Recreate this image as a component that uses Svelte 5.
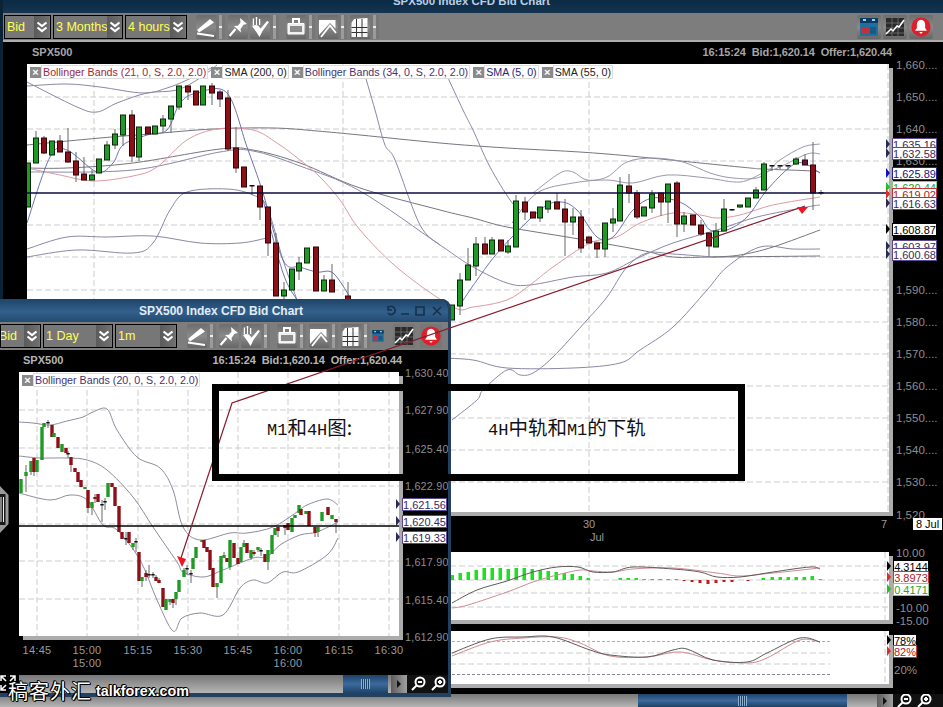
<script>
  const selectsMain = [
    { label: "Bid", w: 47 },
    { label: "3 Months", w: 70 },
    { label: "4 hours", w: 62 },
  ];
  const selectsFloat = [
    { label: "Bid", w: 41, cut: true },
    { label: "1 Day", w: 70 },
    { label: "1m", w: 62 },
  ];
  const tools = [
    { icon: "pencil", split: true },
    { icon: "pin" },
    { icon: "hand", split: true, gap: 2 },
    { icon: "bag", split: true, gap: 7 },
    { icon: "peak", split: true },
    { icon: "grid", split: true },
  ];

  // x, top, bottom, high, low, colour
  const mainCandles = [
    [28,163,207,163,207,"g"],[36,138,163,131,163,"g"],[44,138,153,136,154,"r"],[52,141,155,141,155,"g"],
    [60,141,152,135,152,"r"],[68,152,162,128,163,"r"],[76,161,175,152,182,"r"],[84,174,180,157,180,"r"],
    [92,175,180,170,180,"g"],[99,159,173,159,173,"g"],[107,145,160,141,160,"g"],[115,134,145,129,149,"g"],
    [123,115,135,115,146,"g"],[132,115,156,110,162,"r"],[139,127,157,127,161,"g"],[148,127,134,127,134,"r"],
    [155,126,134,126,134,"g"],[163,119,126,115,133,"g"],[171,106,119,106,133,"g"],[179,86,107,86,110,"g"],
    [188,86,92,86,100,"r"],[196,91,105,91,105,"r"],[203,86,105,86,105,"g"],[212,86,93,83,105,"r"],
    [220,92,99,90,107,"m"],[228,98,149,90,151,"r"],[236,148,168,127,173,"r"],[244,167,187,167,187,"r"],
    [252,185,186,185,195,"k"],[260,186,207,186,220,"r"],[268,207,243,207,256,"r"],[276,243,296,233,296,"r"],
    [284,290,296,282,300,"g"],[292,269,290,269,290,"g"],[299,263,271,257,280,"g"],[307,248,263,248,263,"g"],
    [316,247,291,247,291,"r"],[324,280,291,275,291,"g"],[332,280,292,264,292,"r"],[348,296,300,282,300,"r"],
    [452,305,320,305,320,"g"],[460,280,306,273,315,"g"],[468,265,280,248,280,"g"],[476,244,266,237,276,"g"],
    [485,244,254,237,254,"r"],[492,240,254,237,254,"g"],[501,240,251,240,251,"r"],[508,246,252,240,254,"g"],
    [516,201,247,195,247,"g"],[525,202,212,197,220,"r"],[533,212,218,212,218,"r"],[540,207,218,207,222,"g"],
    [548,201,209,201,213,"g"],[557,202,209,193,209,"r"],[565,209,222,199,256,"r"],[573,217,222,208,235,"g"],
    [581,217,248,210,253,"r"],[589,237,243,237,243,"r"],[597,243,249,243,258,"r"],[605,223,249,223,257,"g"],
    [613,219,223,208,232,"g"],[620,185,221,177,221,"g"],[629,186,193,174,203,"r"],[637,193,217,190,219,"r"],
    [644,207,216,207,216,"g"],[652,194,208,190,213,"g"],[661,193,202,193,216,"r"],[668,184,202,184,223,"g"],
    [677,183,224,181,237,"r"],[684,216,224,212,232,"g"],[693,215,225,215,225,"r"],[701,225,234,220,236,"r"],
    [709,233,246,233,257,"r"],[716,231,247,223,247,"g"],[724,209,231,199,231,"g"],[732,209,210,209,211,"k"],
    [740,205,207,205,208,"g"],[748,198,207,198,207,"g"],[756,190,198,187,198,"g"],[764,164,190,162,190,"g"],
    [772,165,166,165,171,"k"],[780,165,166,165,169,"k"],[788,165,166,165,170,"k"],[796,159,164,157,165,"g"],
    [805,160,165,154,165,"m"],[813,165,193,142,210,"r"],[821,192,193,190,195,"k"],
  ];

  const floatCandles = [
    [21,479,493,479,493,"g"],[26,472,476,465,492,"g"],[31,461,472,461,475,"g"],[34,458,472,458,476,"r"],
    [37,460,472,460,472,"g"],[42,427,460,427,460,"g"],[44,423,427,423,427,"g"],[48,422,423,420,428,"k"],
    [52,425,437,425,437,"r"],[54,433,437,433,437,"g"],[58,437,448,437,448,"r"],[62,444,452,444,452,"g"],
    [66,448,453,448,453,"r"],[68,453,454,451,458,"k"],[71,457,465,457,472,"r"],[75,468,472,468,472,"r"],
    [78,472,482,472,482,"r"],[81,480,487,480,487,"r"],[85,487,489,487,489,"g"],[88,490,508,490,513,"r"],
    [92,502,508,502,515,"g"],[95,497,499,494,503,"r"],[98,494,502,494,502,"r"],[102,504,505,500,522,"k"],
    [105,501,502,498,510,"k"],[108,483,497,483,497,"g"],[112,483,487,483,487,"r"],[115,487,506,487,506,"r"],
    [119,506,532,506,532,"r"],[122,532,539,532,539,"r"],[126,538,539,532,545,"k"],[129,532,543,532,543,"r"],
    [133,543,547,543,550,"g"],[136,541,542,538,552,"k"],[139,552,581,552,581,"r"],[142,577,581,577,587,"g"],
    [146,573,577,570,581,"r"],[149,574,575,565,578,"k"],[153,574,575,572,578,"k"],[156,577,581,575,581,"r"],
    [159,580,583,578,583,"r"],[163,588,607,588,607,"r"],[166,599,610,599,610,"g"],[170,599,602,599,605,"g"],
    [173,599,603,599,608,"r"],[176,592,599,592,605,"g"],[179,580,592,580,592,"g"],[184,570,577,568,577,"g"],
    [187,568,569,565,575,"k"],[191,573,574,570,583,"k"],[193,558,569,558,569,"g"],[196,547,558,547,558,"g"],
    [202,540,542,540,542,"g"],[204,540,548,540,548,"r"],[207,547,552,547,552,"r"],[210,550,570,550,570,"r"],
    [213,568,587,568,587,"r"],[217,583,587,583,598,"g"],[221,556,583,556,583,"g"],[224,555,558,552,558,"g"],
    [227,558,562,558,562,"r"],[230,540,567,540,570,"g"],[234,543,558,543,558,"r"],[238,558,564,558,564,"r"],
    [241,547,562,547,562,"g"],[244,543,547,540,547,"g"],[247,543,553,543,553,"r"],[251,550,558,550,560,"g"],
    [254,552,554,550,556,"r"],[258,547,550,547,552,"g"],[261,550,551,548,556,"k"],[265,554,562,554,562,"r"],
    [268,550,562,550,570,"g"],[272,535,554,535,554,"g"],[275,528,535,528,535,"g"],[278,527,531,527,537,"r"],
    [285,525,528,525,535,"r"],[288,523,530,523,530,"r"],[292,518,532,518,532,"g"],[295,515,518,515,518,"g"],
    [299,505,513,505,513,"g"],[301,509,515,509,515,"r"],[306,511,514,511,514,"g"],[309,511,526,511,526,"r"],
    [315,527,533,527,537,"r"],[318,527,532,527,537,"g"],[322,512,521,512,521,"g"],[328,507,515,507,515,"r"],
    [332,515,519,515,519,"g"],[336,519,522,519,533,"r"],
  ];

  const mainLines = [
    { c: "#77757f", p: [[27,145],[100,138],[150,134],[213,129],[273,128],[317,131],[360,135],[440,143],[507,148],[607,154],[740,167],[763,169],[812,171],[820,173]] },
    { c: "#8a88a6", p: [[27,82],[77,107],[97,112],[117,103],[147,93],[177,90],[200,78],[217,65]] },
    { c: "#8a88a6", p: [[27,86],[67,84],[100,87],[143,93],[167,88],[187,80],[213,67]] },
    { c: "#77757f", p: [[27,168],[67,168],[133,163],[220,149],[253,150],[300,163],[360,188],[440,210],[473,218],[507,227],[573,238],[640,250],[673,257],[713,257],[820,256]] },
    { c: "#8a88a6", p: [[27,172],[133,170],[220,152],[253,151],[300,166],[360,191],[440,245],[473,267],[507,283],[530,285],[573,277],[607,273],[640,257],[673,243],[717,230],[757,217],[807,207],[820,205]] },
    { c: "#8a88a6", p: [[362,65],[375,110],[385,145],[395,160],[420,225],[440,245]] },
    { c: "#8a88a6", p: [[442,65],[463,110],[473,130],[490,167],[510,200],[520,210]] },
    { c: "#9a98ad", p: [[533,193],[560,173],[573,172],[587,180],[607,177],[627,162],[653,158],[683,162],[710,173],[733,178],[760,177],[780,160],[803,147],[820,144]] },
    { c: "#9a98ad", p: [[512,223],[537,193],[573,183],[607,180],[633,183],[667,175],[707,178],[740,182],[763,173],[780,167],[807,154],[820,154]] },
    { c: "#8a88a6", p: [[27,249],[67,237],[107,237],[153,236],[200,243],[240,243],[267,238]] },
    { c: "#8a88a6", p: [[27,257],[77,250],[133,253],[153,243],[170,210],[187,192],[227,189],[253,195],[267,207],[283,260],[297,300]] },
    { c: "#8a88a6", p: [[440,358],[473,360],[507,368],[573,368],[620,363],[640,350],[673,327],[707,290],[727,267],[760,247],[793,249],[820,249]] },
    { c: "#8a88a6", p: [[452,420],[477,400],[483,390],[507,370],[520,375],[533,373],[553,357],[587,320],[607,297],[627,267],[647,253],[673,254],[713,257]] },
    { c: "#77757f", p: [[713,257],[740,255],[773,247],[820,230]] },
    { c: "#dc9aa2", p: [[27,168],[60,175],[93,181],[133,176],[157,167],[187,140],[217,129],[253,130],[277,143],[300,160],[320,177],[340,200],[360,230],[400,270],[453,307],[473,307],[507,300],[530,285],[553,267],[590,243],[617,237],[640,223],[673,213],[700,215],[717,218],[740,215],[773,205],[820,197]] },
    { c: "#6a73b4", p: [[27,223],[50,157],[67,150],[97,172],[113,163],[123,145],[147,135],[167,130],[180,103],[197,93],[227,93],[247,147],[263,193],[283,260],[300,267],[317,272],[333,273],[350,297]] },
    { c: "#6a73b4", p: [[263,200],[283,273],[297,300]] },
    { c: "#6a73b4", p: [[460,305],[477,280],[500,250],[540,210],[560,202],[577,210],[597,237],[613,237],[633,210],[653,198],[680,202],[700,217],[710,230],[727,230],[747,217],[767,190],[790,167],[803,163],[820,173]] },
  ];

  const floatLines = [
    [[19,422],[33,423],[50,425],[67,421],[83,417],[93,412],[107,409],[117,430],[137,457],[160,468],[173,490],[183,527],[200,540],[230,533],[247,533],[273,527],[297,512],[307,505],[327,499],[338,505]],
    [[19,456],[40,458],[67,458],[87,460],[107,470],[133,497],[153,527],[177,562],[183,572],[203,577],[223,570],[253,558],[267,557],[280,545],[300,535],[317,532],[338,522]],
    [[19,493],[50,500],[70,495],[87,500],[103,525],[117,530],[140,560],[157,600],[173,631],[182,618],[200,613],[223,615],[240,588],[253,580],[267,583],[283,572],[298,572],[327,555],[338,538]],
  ];

  const macdBars = [
    [452,575],[460,573],[468,572],[476,570],[484,568],[492,568],[500,568],[508,569],[516,568],[524,568],[532,569],[540,570],[548,571],[556,572],[564,573],[572,574],[580,576],[588,578],
    [620,578],[628,578],[636,578],[644,579],[652,579],[660,579],[668,579],[676,579],
    [763,578],[772,577],[780,577],[788,577],[796,577],[804,577],[812,576],[820,579],
  ];
  const macdRed = [[684,581],[692,582],[700,583],[708,584],[716,583],[724,582],[732,582],[748,581]];

  const macdDark = [[452,603],[477,590],[507,581],[533,572],[557,567],[578,567],[593,572],[613,572],[633,567],[673,569],[700,572],[717,577],[740,577],[773,572],[810,567],[820,569]];
  const macdPink = [[452,608],[468,605],[507,592],[533,582],[557,575],[580,570],[593,571],[613,572],[633,569],[673,568],[717,573],[740,576],[773,573],[820,568]];
  const stochDark = [[452,653],[490,639],[523,637],[553,637],[590,650],[610,655],[647,657],[673,650],[687,649],[713,660],[747,662],[767,653],[800,638],[820,642]];
  const stochPink = [[452,656],[490,642],[523,638],[557,637],[580,643],[610,656],[647,657],[680,652],[713,660],[747,663],[767,658],[800,640],[820,642]];

  const mainHoriz = [97,129,161,225,257,290,322,354,386,418,450,482];
  const floatHoriz = [410,448,486,524,561,599];
  const floatVert = [37,87,138,188,238,288,339,389];

  const mainAxis = [
    [65,"1,660...."],[97,"1,650...."],[129,"1,640...."],[161,"1,630...."],[290,"1,590...."],[322,"1,580...."],
    [354,"1,570...."],[386,"1,560...."],[418,"1,550...."],[450,"1,540...."],[482,"1,530...."],[515,"1,520...."],
  ];
  const mainTags = [
    { y: 144, t: "1,635.16", k: "violet" },{ y: 153, t: "1,632.58", k: "violet" },{ y: 173, t: "1,625.89", k: "blue" },
    { y: 187, t: "1,620.44", k: "green" },{ y: 194, t: "1,619.02", k: "red" },{ y: 203, t: "1,616.63", k: "violet" },
    { y: 229, t: "1,608.87", k: "black" },{ y: 246, t: "1,603.97", k: "violet" },{ y: 254, t: "1,600.68", k: "violet" },
  ];
  const floatAxis = [
    [373,"1,630.40"],[410,"1,627.90"],[449,"1,625.40"],[486,"1,622.90"],[562,"1,617.90"],[600,"1,615.40"],[637,"1,612.90"],
  ];
  const floatTags = [
    { y: 504, t: "1,621.56", k: "violet" },{ y: 521, t: "1,620.45", k: "violet" },{ y: 537, t: "1,619.33", k: "violet" },
  ];
  const floatTimes = [
    ["14:45",37],["15:00",87],["15:15",138],["15:30",188],["15:45",238],["16:00",288],["16:15",339],["16:30",389],
  ];

  // catmull-rom through the read-off points, the bands are soft curves
  const smooth = (p) => {
    let d = `M${p[0][0]} ${p[0][1]}`;
    for (let i = 0; i < p.length - 1; i++) {
      const a = p[i - 1] || p[i];
      const b = p[i];
      const c = p[i + 1];
      const e = p[i + 2] || c;
      const c1 = [b[0] + (c[0] - a[0]) / 6, b[1] + (c[1] - a[1]) / 6];
      const c2 = [c[0] - (e[0] - b[0]) / 6, c[1] - (e[1] - b[1]) / 6];
      d += ` C${c1[0].toFixed(1)} ${c1[1].toFixed(1)} ${c2[0].toFixed(1)} ${c2[1].toFixed(1)} ${c[0]} ${c[1]}`;
    }
    return d;
  };
</script>

{#snippet icon(name)}
  <svg class="ico" viewBox="0 0 20 24" aria-hidden="true">
    {#if name === "pencil"}
      <path d="M1 15 14 4l4 3.500L3 17.500z" fill="#fff" />
      <path d="M1 18.500 18 21" stroke="#fff" stroke-width="1.800" fill="none" />
    {:else if name === "pin"}
      <path d="M12 3l7 6-3.500.8-3 4.200.5 3.500-7-6.500 3.800-.3 2.700-3.200z" fill="#fff" />
      <path d="M7.500 14 1.500 21" stroke="#fff" stroke-width="2.200" fill="none" />
    {:else if name === "hand"}
      <path d="M2 11l5 7 2.500 4 3-6 6.500-9-2-1-5 6-1.500 1.500-2.500-3-2.500-.5z" fill="#fff" />
      <path d="M3.500 3.500v7M6.500 2v8M9.500 4v6" stroke="#fff" stroke-width="1.500" fill="none" />
      <path d="M5 4v6M8 4v6" stroke="#555" stroke-width=".8" fill="none" />
    {:else if name === "bag"}
      <path d="M2 8.500h16V19H2z" fill="#eee" stroke="#fff" />
      <path d="M4 11h12v6H4z" fill="#8b8b8b" />
      <path d="M7 9V4h6v5" fill="none" stroke="#fff" stroke-width="2" />
    {:else if name === "peak"}
      <path d="M1 5h16.500v8.500L12 8 1 20z" fill="#fff" />
      <path d="M3 22 12 10.500 18 18" fill="none" stroke="#fff" stroke-width="1.800" />
    {:else if name === "grid"}
      <path d="M1.500 8h16v14h-16z" fill="#f6f6f6" />
      <path d="M1.500 8 4 4l13.500-1v5z" fill="#fff" />
      <path d="M6.500 4v18M12 4v18M1.500 12.500h16M1.500 17.500h16" stroke="#333" fill="none" />
    {/if}
  </svg>
{/snippet}

{#snippet calendar()}
  <svg class="ico" viewBox="0 0 22 24" aria-hidden="true">
    <path d="M2 3h18v18H2z" fill="#1f6f9f" />
    <path d="M2 3h18v5H2z" fill="#0d3a5f" />
    <path d="M5 4h3v2H5zM14 4h3v2h-3z" fill="#9fd0f0" />
    <path d="M4 12h7v7H4z" fill="#c23040" />
    <path d="M12 12h6v7h-6z" fill="#165a8a" />
  </svg>
{/snippet}

{#snippet linechart()}
  <svg class="ico" viewBox="0 0 22 24" aria-hidden="true">
    <path d="M2 3h18v18H2z" fill="#2a2a2a" />
    <path d="M2 8h18M2 13h18M2 18h18M8 3v18M14 3v18" stroke="#8a8a8a" stroke-width=".6" />
    <path d="M2 19l5-5 2 2 4-5 2 1 5-7" stroke="#fff" stroke-width="1.500" fill="none" />
  </svg>
{/snippet}

{#snippet bell()}
  <svg class="ico" viewBox="0 0 24 24" aria-hidden="true">
    <circle cx="12" cy="12" r="10.500" fill="#dd1f2a" />
    <path d="M12 4c3 0 4.500 2.500 4.500 5v4l2 3h-13l2-3V9c0-2.500 1.500-5 4.500-5z" fill="#fff" />
    <path d="M10 17.500h4l-2 2z" fill="#fff" />
  </svg>
{/snippet}

{#snippet toolbar(selects, compact)}
  <div class="toolbar" class:compact>
    <div class="selects">
      {#each selects as s}
        <div class="select" style="width:{s.w}px">
          <span class="val" class:cut={s.cut}>{s.label}</span>
          <span class="chev">
            <svg viewBox="0 0 12 14" aria-hidden="true">
              <path d="M1.500 2.500 6 6l4.500-3.500M1.500 7.500 6 11l4.500-3.500" fill="none" stroke="#fff" stroke-width="2.200" />
            </svg>
          </span>
        </div>
      {/each}
    </div>
    <div class="tools">
      {#each tools as t}
        <div class="tool" style="margin-left:{t.gap ?? 3}px">
          {@render icon(t.icon)}
          {#if t.split}<span class="split"></span>{/if}
        </div>
      {/each}
    </div>
    <div class="tools end">
      <div class="tool wide narrow">{@render calendar()}</div>
      <div class="tool wide">{@render linechart()}</div>
      <div class="tool wide">{@render bell()}</div>
    </div>
  </div>
{/snippet}

{#snippet tags(list, top)}
  {#each list as tag}
    <span class="tag {tag.k}" style="top:{tag.y - top - 6}px">{tag.t}</span>
  {/each}
{/snippet}

{#snippet candle(list, w, outline)}
  {#each list as [x, t, b, hi, lo, k]}
    <path class="wick" d="M{x} {hi}V{lo}" />
    {#if k === "k"}
      <rect x={x - w / 2} y={t} width={w} height="1.500" fill="#111" />
    {:else}
      <rect class="body {k}" class:outline x={x - w / 2} y={t} width={w} height={Math.max(b - t, 1)} />
    {/if}
  {/each}
{/snippet}

{#snippet scroller(left, thumb, arrowGap)}
  <div class="scroller" style="padding-left:{left}px">
    <span class="thumb" style="width:{thumb}px"><i></i></span>
    <span class="arrow" style="margin-left:{arrowGap}px"></span>
    <span class="lenses">
      <svg class="lens" viewBox="0 0 16 16" aria-hidden="true">
        <circle cx="10" cy="6" r="4.500" fill="#111" stroke="#fff" stroke-width="2" />
        <path d="M6.500 9.500 2 14M8 6h4" stroke="#fff" stroke-width="2" fill="none" />
      </svg>
      <svg class="lens" viewBox="0 0 16 16" aria-hidden="true">
        <circle cx="10" cy="6" r="4.500" fill="#111" stroke="#fff" stroke-width="2" />
        <path d="M6.500 9.500 2 14M8 6h4M10 4v4" stroke="#fff" stroke-width="2" fill="none" />
      </svg>
    </span>
  </div>
{/snippet}

<div class="desk">
  <section class="win main">
    <header class="title"><span>SPX500 Index CFD Bid Chart</span></header>
    {@render toolbar(selectsMain, false)}
    <div class="grid">
      <div class="head">
        <b class="sym">SPX500</b>
        <b class="quote">16:15:24&nbsp;&nbsp;Bid:1,620.14&nbsp;&nbsp;Offer:1,620.44</b>
      </div>
      <div class="collapse"></div>

      <div class="pane">
        <svg viewBox="27 64 862 448" width="862" height="448" aria-hidden="true">
          {#each mainHoriz as y}<path class="dash" d="M27 {y}H889" />{/each}
          {#each [94, 343, 589, 888] as x}<path class="dash" d="M{x} 64V512" />{/each}
          {#each mainLines as l}<path class="line" d={smooth(l.p)} stroke={l.c} />{/each}
          {@render candle(mainCandles, 5, true)}
          <path class="now" d="M27 193H889" />
        </svg>
        <div class="studies">
          <span class="study"><i></i><em class="brick">Bollinger Bands (21, 0, S, 2.0, 2.0)</em></span>
          <span class="study"><i></i><em class="ink">SMA (200, 0)</em></span>
          <span class="study"><i></i><em class="plum">Bollinger Bands (34, 0, S, 2.0, 2.0)</em></span>
          <span class="study"><i></i><em class="navy">SMA (5, 0)</em></span>
          <span class="study"><i></i><em class="ink">SMA (55, 0)</em></span>
        </div>
      </div>
      <div class="axis">
        {#each mainAxis as [y, t]}<span class="tick" style="top:{y - 64 - 7}px">{t}</span>{/each}
        {@render tags(mainTags, 64)}
      </div>

      <div class="times">
        <span class="time" style="left:{589 - 27}px">30</span>
        <span class="time low" style="left:{597 - 27}px">Jul</span>
        <span class="time" style="left:{884 - 27}px">7</span>
      </div>
      <div class="axis"><span class="date">8 Jul</span></div>

      <div class="pane">
        <svg viewBox="27 552 862 68" width="862" height="68" aria-hidden="true">
          {#each [566, 580, 593, 607] as y}<path class="dash" d="M27 {y}H889" />{/each}
          {#each [589, 885] as x}<path class="dash" d="M{x} 552V620" />{/each}
          {#each macdBars as [x, t]}<rect x={x - 1.500} y={t} width="3.500" height={580 - t} fill="#1fe01f" />{/each}
          {#each macdRed as [x, b]}<rect x={x - 1.500} y="580" width="3" height={b - 580} fill="#c11a1a" />{/each}
          <path class="line" d={smooth(macdPink)} stroke="#d28a93" />
          <path class="line" d={smooth(macdDark)} stroke="#5d5a5a" />
        </svg>
      </div>
      <div class="axis">
        <span class="tick" style="top:-6px">10.00</span>
        <span class="tick" style="top:49px">-10.00</span>
        <span class="tick" style="top:62px">-15.00</span>
        <span class="tag black short" style="top:8px">4.3144</span>
        <span class="tag red short" style="top:19px">3.8973</span>
        <span class="tag green short" style="top:31px">0.4171</span>
      </div>

      <div class="spacer"></div>
      <div class="spacer"></div>

      <div class="pane">
        <svg viewBox="27 631 862 53" width="862" height="53" aria-hidden="true">
          <path class="dash red" d="M27 641.500H830" />
          <path class="dash" d="M27 653H830M27 664H830" />
          <path class="dash dark" d="M27 674.500H830" />
          {#each [589, 885] as x}<path class="dash" d="M{x} 631V684" />{/each}
          <path class="line" d={smooth(stochPink)} stroke="#d28a93" />
          <path class="line" d={smooth(stochDark)} stroke="#5d5a5a" />
        </svg>
      </div>
      <div class="axis">
        <span class="tag black pct" style="top:3px">78%</span>
        <span class="tag red pct" style="top:14px">82%</span>
        <span class="tick" style="top:32px;left:5px">20%</span>
      </div>
    </div>
    {@render scroller(638, 209, 30)}
  </section>

  <section class="win float">
    <header class="title"><span>SPX500 Index CFD Bid Chart</span>
      <svg class="caps" viewBox="0 0 56 12" aria-hidden="true">
        <path d="M2 2a4 4 0 1 1-1 6M1 1v4h4M14 9h8M29 2h8v8h-8zM46 2l8 8M54 2l-8 8" fill="none" stroke="#16304a" stroke-width="1.600" />
      </svg>
    </header>
    {@render toolbar(selectsFloat, true)}
    <div class="grid">
      <div class="head">
        <b class="sym">SPX500</b>
        <b class="quote">16:15:24&nbsp;&nbsp;Bid:1,620.14&nbsp;&nbsp;Offer:1,620.44</b>
      </div>
      <div class="collapse"></div>

      <div class="pane">
        <svg viewBox="19 372 380 264" width="380" height="264" aria-hidden="true">
          {#each floatHoriz as y}<path class="dash" d="M19 {y}H399" />{/each}
          {#each floatVert as x}<path class="dash" d="M{x} 372V636" />{/each}
          {#each floatLines as p}<path class="line" d={smooth(p)} stroke="#8e8b9a" />{/each}
          {@render candle(floatCandles, 3.4, false)}
          <path class="now black" d="M19 526H399" />
        </svg>
        <div class="studies">
          <span class="study"><i></i><em class="plum">Bollinger Bands (20, 0, S, 2.0, 2.0)</em></span>
        </div>
      </div>
      <div class="axis">
        {#each floatAxis as [y, t]}<span class="tick" style="top:{y - 372 - 7}px">{t}</span>{/each}
        {@render tags(floatTags, 372)}
      </div>

      <div class="times">
        {#each floatTimes as [t, x]}<span class="time" style="left:{x - 19}px">{t}</span>{/each}
        <span class="time low" style="left:{87 - 19}px">15:00</span>
        <span class="time low" style="left:{288 - 19}px">16:00</span>
      </div>
      <div></div>
    </div>
    {@render scroller(324, 45, 3)}
    <svg class="expand" viewBox="0 0 16 16" aria-hidden="true">
      <path d="M1 6V1h5M1 1l5 5M15 6V1h-5M15 1l-5 5M1 10v5h5M1 15l5-5" fill="none" stroke="#fff" stroke-width="1.500" />
    </svg>
  </section>

  <svg class="handle" viewBox="0 0 9 47" aria-hidden="true">
    <path d="M0 0 8.500 9V38L0 47z" fill="#9a9a9a" />
    <path d="M0 8H5.500V39H0z" fill="#1a1a1a" />
    <path d="M1 11V36M3.500 11V36" stroke="#eee" />
  </svg>

  <svg class="arrows" viewBox="0 0 943 707" aria-hidden="true">
    <path d="M180 561 232 403 805 206" fill="none" stroke="#8a1a2c" stroke-width="1.200" />
    <path d="M182 567 177 556 186 559z" fill="#ee1520" />
    <path d="M808 207 797 207 802 214z" fill="#ee1520" />
  </svg>

  <div class="note">
    <span class="left"><span class="lat">M1</span>和<span class="lat">4H</span>图:</span>
    <span class="right"><span class="lat">4H</span>中轨和<span class="lat">M1</span>的下轨</span>
  </div>

  <div class="stamp"><span class="han">稿客外汇</span> <span class="latin">talkforex.com</span></div>
</div>

<style>
  :global(body) {
    margin: 0;
    background: #000;
  }
  .desk {
    position: relative;
    width: 943px;
    height: 707px;
    overflow: hidden;
    font-family: "Liberation Sans", Arial, sans-serif;
  }
  .win {
    display: flex;
    flex-direction: column;
    background: #000;
    box-sizing: border-box;
  }
  .main {
    width: 943px;
    height: 707px;
    border-left: 3px solid #0b2336;
  }
  .float {
    position: absolute;
    left: 0;
    top: 299px;
    width: 451px;
    height: 398px;
    border-right: 3px solid #23405e;
    border-bottom: 4px solid #23405e;
    border-top-right-radius: 9px;
    overflow: hidden;
  }
  .title {
    flex: none;
    height: 13px;
    overflow: hidden;
    display: flex;
    justify-content: center;
    background: linear-gradient(#0b2a44, #14344f);
    color: #b9cfe4;
    font-weight: bold;
    font-size: 11.500px;
  }
  .title span {
    margin-top: -5px;
    margin-right: 3px;
  }
  .float .title {
    position: relative;
    height: 23px;
    align-items: center;
    background: linear-gradient(#1e4468, #32608c 55%, #244a70);
    color: #e2ecf6;
    font-size: 12px;
  }
  .float .title span {
    margin: 0;
    transform: translateX(-3px);
  }
  .caps {
    position: absolute;
    right: 5px;
    top: 6px;
    width: 56px;
    height: 12px;
  }

  .toolbar {
    flex: none;
    height: 29px;
    box-sizing: border-box;
    display: flex;
    align-items: center;
    padding-left: 1px;
    background: #7d7d7d;
    border-bottom: 2px solid #adadad;
  }
  .toolbar.compact {
    height: 28px;
    padding-left: 0;
    border-bottom: none;
  }
  .selects {
    display: flex;
    gap: 2px;
  }
  .select {
    box-sizing: border-box;
    height: 24px;
    display: flex;
    align-items: center;
    justify-content: space-between;
    border: 1px solid #000;
    background: #777;
    overflow: hidden;
  }
  .val {
    padding-left: 2px;
    color: #ffff55;
    font-size: 12.500px;
    white-space: nowrap;
  }
  .val.cut {
    margin-left: -4px;
  }
  .chev {
    flex: none;
    width: 15px;
    height: 22px;
    margin-right: 1px;
    display: flex;
    align-items: center;
    justify-content: center;
    background: linear-gradient(90deg, #5b5b5b, #6f6f6f);
  }
  .chev svg {
    width: 12px;
    height: 14px;
  }
  .tools {
    display: flex;
    margin-left: 6px;
  }
  .tool {
    height: 24px;
    display: flex;
    align-items: center;
    border-radius: 2px;
    background: linear-gradient(#6d6d6d, #8a8a8a 50%, #666);
  }
  .ico {
    display: block;
    width: 20px;
    height: 24px;
  }
  .wide .ico {
    width: 22px;
  }
  .split {
    width: 9px;
    height: 24px;
    background: linear-gradient(90deg, #777 3px, #9b9b9b 3px, #9b9b9b 6px, #777 6px);
    position: relative;
  }
  .split::after {
    content: "";
    position: absolute;
    left: 3px;
    top: 11px;
    width: 3px;
    height: 2px;
    background: #eee;
  }
  .end {
    margin-left: auto;
    margin-right: 10px;
    gap: 2px;
  }
  .wide {
    width: 24px;
    justify-content: center;
  }
  .compact .end {
    margin-right: 7px;
    gap: 5px;
  }
  .compact .wide {
    width: 22px;
    background: #777;
  }
  .compact .narrow {
    width: 15px;
    background: none;
    margin-right: 3px;
  }
  .compact .narrow .ico {
    width: 14px;
  }
  .compact .tools:not(.end) {
    margin-left: 7px;
  }

  .grid {
    flex: 1;
    display: grid;
    grid-template-columns: 862px 51px;
    grid-template-rows: 22px 448px 40px 68px 11px 53px;
    padding-left: 24px;
  }
  .float .grid {
    grid-template-columns: 380px 49px;
    grid-template-rows: 22px 264px 39px;
    padding-left: 19px;
  }
  .head {
    display: flex;
    justify-content: space-between;
    align-items: center;
    padding: 0 0 2px 5px;
    color: #a6a6a6;
    font-size: 11px;
    white-space: nowrap;
  }
  .float .head {
    padding-left: 4px;
    color: #b5b5b5;
  }
  .quote {
    margin-right: -3px;
    letter-spacing: -0.1px;
  }
  .pane {
    position: relative;
    background: #fff;
    box-shadow: 4px 4px 0 #acacac;
  }
  .pane svg {
    display: block;
  }
  .dash {
    stroke: #cdcdcd;
    stroke-width: 1;
    stroke-dasharray: 6 3;
    fill: none;
  }
  .dash.red {
    stroke: #e19a9a;
    stroke-dasharray: 3 2;
  }
  .dash.dark {
    stroke: #8a86a0;
    stroke-dasharray: 3 2;
  }
  .line {
    fill: none;
    stroke-width: 1;
  }
  .now {
    stroke: #0b0b40;
    stroke-width: 1.300;
  }
  .now.black {
    stroke: #000;
  }
  .wick {
    stroke: #666;
    stroke-width: 1;
  }
  .body.g {
    fill: #1f9a25;
  }
  .body.r {
    fill: #8f0f18;
  }
  .body.m {
    fill: #6a1242;
  }
  .body.outline {
    stroke: #0c260c;
    stroke-width: 1;
  }
  .body.outline.r,
  .body.outline.m {
    stroke: #2c0508;
  }
  .studies {
    position: absolute;
    left: 3px;
    top: 1px;
    display: flex;
    gap: 3px;
  }
  .study {
    display: flex;
    align-items: center;
    white-space: nowrap;
  }
  .study i {
    width: 11px;
    height: 11px;
    background: #8a8a8a;
    position: relative;
  }
  .study i::before {
    content: "×";
    position: absolute;
    inset: 0;
    color: #fff;
    font: bold 11px/10px "Liberation Sans", sans-serif;
    font-style: normal;
    text-align: center;
  }
  .study em {
    font-style: normal;
    font-size: 10.700px;
    line-height: 12px;
    background: #fff;
    border: 1px solid #ddd;
    padding: 0 1px;
  }
  .brick {
    color: #9c2b3a;
  }
  .ink {
    color: #222;
  }
  .plum {
    color: #47336f;
  }
  .navy {
    color: #27277a;
  }

  .axis {
    position: relative;
    z-index: 1;
  }
  .tick {
    position: absolute;
    left: 7px;
    color: #8e8e8e;
    font-size: 11.500px;
    line-height: 14px;
    white-space: nowrap;
  }
  .float .tick {
    left: 6px;
    font-size: 10.800px;
    letter-spacing: 0.2px;
  }
  .tag {
    position: absolute;
    left: 3px;
    box-sizing: border-box;
    width: 45px;
    height: 13px;
    border: 1px solid #5b4a8f;
    background: #fff;
    color: #332a5c;
    font-size: 11px;
    line-height: 12px;
    text-align: center;
    white-space: nowrap;
    --tri: #2a2a55;
  }
  .tag::before {
    content: "";
    position: absolute;
    left: -7px;
    top: 0;
    border-left: 4px solid var(--tri);
    border-top: 5px solid transparent;
    border-bottom: 5px solid transparent;
  }
  .blue {
    border-color: #22229a;
    color: #14147a;
    --tri: #1010c0;
  }
  .green {
    border-color: #7fd17f;
    color: #2aa12a;
    --tri: #22c022;
  }
  .red {
    border-color: #c33;
    color: #a22;
    background: #fff;
    --tri: #e02a2a;
  }
  .black {
    border-color: #000;
    color: #000;
    --tri: #000;
  }
  .short {
    width: 36px;
    left: 4px;
  }
  .pct {
    width: 24px;
    left: 4px;
  }
  .date {
    position: absolute;
    left: 24px;
    top: 6px;
    width: 29px;
    background: #fff;
    color: #000;
    font-size: 11px;
    line-height: 12px;
    text-align: center;
  }
  .times {
    position: relative;
  }
  .time {
    position: absolute;
    top: 5px;
    transform: translateX(-50%);
    color: #9a9a9a;
    font-size: 11px;
    line-height: 14px;
  }
  .time.low {
    top: 18px;
  }
  .float .time {
    top: 7px;
    letter-spacing: 0.3px;
  }
  .float .time.low {
    top: 20px;
  }

  .scroller {
    flex: none;
    height: 13px;
    display: flex;
    align-items: center;
    box-sizing: border-box;
    background: linear-gradient(#777, #b5b5b5);
    position: relative;
  }
  .float .scroller {
    height: 18px;
    margin-left: 19px;
  }
  .main .scroller {
    margin-left: -3px;
  }
  .thumb {
    height: 100%;
    display: flex;
    align-items: center;
    justify-content: center;
    background: linear-gradient(#1d4268, #3c6a9c 50%, #1d4268);
  }
  .thumb i {
    width: 9px;
    height: 10px;
    background: repeating-linear-gradient(90deg, #8fb0d0 0 1px, #1d4268 1px 2px);
  }
  .arrow {
    flex: none;
    box-sizing: border-box;
    width: 16px;
    height: 100%;
    background: linear-gradient(90deg, #5d5d5d, #a0a0a0);
    position: relative;
  }
  .arrow::after {
    content: "";
    position: absolute;
    left: 6px;
    top: 50%;
    margin-top: -4px;
    border-left: 4px solid #111;
    border-top: 4px solid transparent;
    border-bottom: 4px solid transparent;
  }
  .lenses {
    height: 100%;
    flex: 1;
    display: flex;
    align-items: center;
    gap: 4px;
    padding-left: 3px;
    background: #111;
    overflow: hidden;
  }
  .lens {
    flex: none;
    width: 16px;
    height: 16px;
  }
  .expand {
    position: absolute;
    left: 0;
    bottom: 2px;
    width: 16px;
    height: 16px;
  }
  .handle {
    position: absolute;
    left: 0;
    top: 486px;
    width: 9px;
    height: 47px;
  }
  .arrows {
    position: absolute;
    inset: 0;
    width: 943px;
    height: 707px;
    pointer-events: none;
  }
  .note {
    position: absolute;
    left: 212px;
    top: 384px;
    width: 533px;
    height: 97px;
    box-sizing: border-box;
    border: 7px solid #000;
    display: flex;
    align-items: center;
    padding-bottom: 8px;
    font-family: "Noto Sans CJK SC", sans-serif;
    font-size: 19.500px;
    line-height: 22px;
    color: #111;
    white-space: nowrap;
  }
  .lat {
    font-family: "Liberation Mono", monospace;
    font-size: 17px;
  }
  .left {
    margin-left: 48px;
    width: 221px;
  }
  .stamp {
    position: absolute;
    left: 8px;
    top: 679px;
    color: #fff;
    display: flex;
    align-items: center;
    gap: 4px;
    white-space: nowrap;
    text-shadow: -1px 0 0 #000, 1px 0 0 #000, 0 -1px 0 #000, 0 1px 0 #000, 1px 1px 0 #000, -1px -1px 0 #000;
  }
  .han {
    font-family: "Noto Sans CJK SC", sans-serif;
    font-size: 20px;
    line-height: 24px;
    letter-spacing: 1px;
  }
  .latin {
    font-weight: bold;
    font-size: 14.300px;
    line-height: 24px;
  }
</style>
